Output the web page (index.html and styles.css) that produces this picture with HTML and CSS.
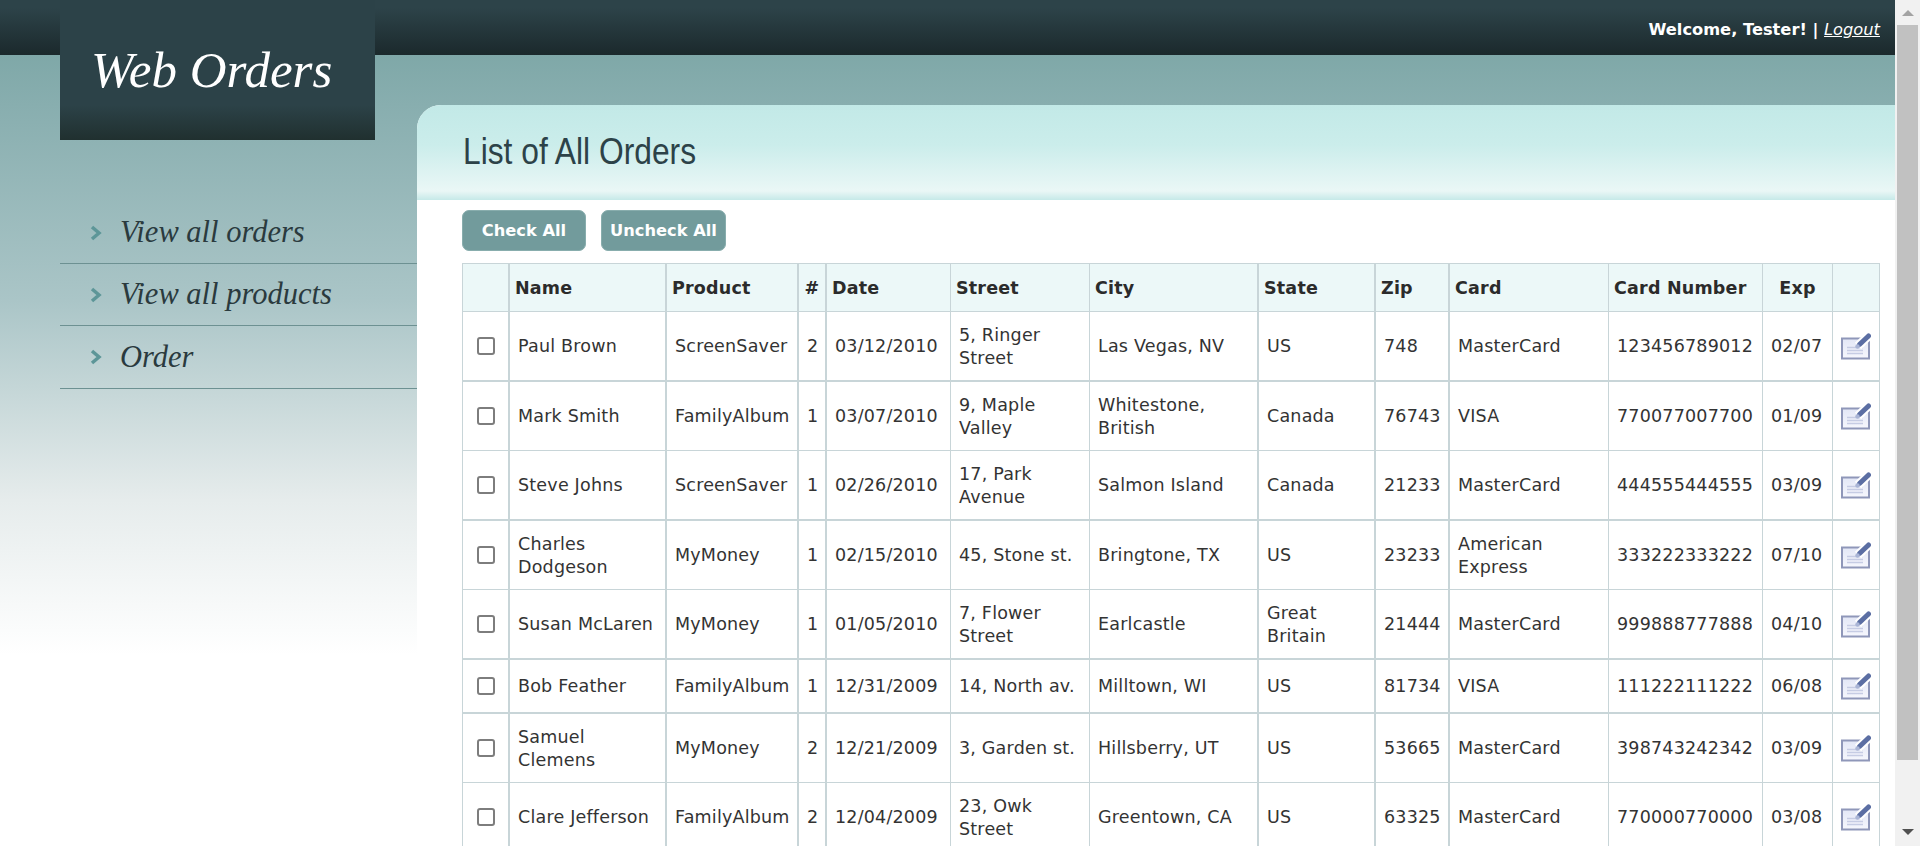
FILE: index.html
```html
<!DOCTYPE html>
<html lang="en">
<head>
<meta charset="utf-8">
<title>Web Orders</title>
<link rel="stylesheet" href="styles.css">
</head>
<body>
<svg class="defs" width="0" height="0" aria-hidden="true">
  <defs>
    <linearGradient id="sheet" x1="0" y1="0" x2="0" y2="1">
      <stop offset="0" stop-color="#e3e7f6"/>
      <stop offset="1" stop-color="#f6f7fd"/>
    </linearGradient>
  </defs>
  <symbol id="edit" viewBox="0 0 30 27">
    <rect x="1" y="5.500" width="27" height="20" fill="url(#sheet)" stroke="#8f97b9" stroke-width="2"/>
    <path d="M6 14.500H22M6 17.500H22M6 20.500H22" stroke="#c6cce4" stroke-width="1.300" fill="none"/>
    <path d="M17 13L27 3.500" stroke="#fff" stroke-width="9" fill="none"/>
    <path d="M18.500 11.500L27.500 3" stroke="#5b6ea3" stroke-width="5" stroke-linecap="round" fill="none"/>
    <circle cx="16.500" cy="13.500" r="2.200" fill="#aab5d6"/>
  </symbol>
</svg>
<div class="window">
  <div class="page">
    <aside class="sidebar">
      <div class="logo">Web Orders</div>
      <nav class="menu">
        <a class="menu-item"><svg class="chev" viewBox="0 0 12 16"><path d="M2 2L9 8L2 14"/></svg>View all orders</a>
        <a class="menu-item"><svg class="chev" viewBox="0 0 12 16"><path d="M2 2L9 8L2 14"/></svg>View all products</a>
        <a class="menu-item"><svg class="chev" viewBox="0 0 12 16"><path d="M2 2L9 8L2 14"/></svg>Order</a>
      </nav>
    </aside>
    <main class="main">
      <div class="login">Welcome, Tester! | <a class="logout">Logout</a></div>
      <section class="content">
        <header class="content-head"><h1>List of All Orders</h1></header>
        <div class="content-body">
          <div class="actions">
            <button class="btn">Check All</button>
            <button class="btn">Uncheck All</button>
          </div>
          <table class="orders">
            <colgroup>
              <col class="c1"><col class="c2"><col class="c3"><col class="c4"><col class="c5"><col class="c6"><col class="c7"><col class="c8"><col class="c9"><col class="c10"><col class="c11"><col class="c12"><col class="c13">
            </colgroup>
            <thead>
              <tr><th></th><th>Name</th><th>Product</th><th class="ctr">#</th><th>Date</th><th>Street</th><th>City</th><th>State</th><th>Zip</th><th>Card</th><th>Card Number</th><th class="ctr">Exp</th><th></th></tr>
            </thead>
            <tbody>
              <tr class="thick"><td class="chk"><input type="checkbox"></td><td>Paul Brown</td><td>ScreenSaver</td><td>2</td><td>03/12/2010</td><td>5, Ringer Street</td><td>Las Vegas, NV</td><td>US</td><td>748</td><td>MasterCard</td><td>123456789012</td><td>02/07</td><td><svg class="edit"><use href="#edit"/></svg></td></tr>
              <tr><td class="chk"><input type="checkbox"></td><td>Mark Smith</td><td>FamilyAlbum</td><td>1</td><td>03/07/2010</td><td>9, Maple Valley</td><td>Whitestone, British</td><td>Canada</td><td>76743</td><td>VISA</td><td>770077007700</td><td>01/09</td><td><svg class="edit"><use href="#edit"/></svg></td></tr>
              <tr class="thick"><td class="chk"><input type="checkbox"></td><td>Steve Johns</td><td>ScreenSaver</td><td>1</td><td>02/26/2010</td><td>17, Park Avenue</td><td>Salmon Island</td><td>Canada</td><td>21233</td><td>MasterCard</td><td>444555444555</td><td>03/09</td><td><svg class="edit"><use href="#edit"/></svg></td></tr>
              <tr><td class="chk"><input type="checkbox"></td><td>Charles Dodgeson</td><td>MyMoney</td><td>1</td><td>02/15/2010</td><td>45, Stone st.</td><td>Bringtone, TX</td><td>US</td><td>23233</td><td>American Express</td><td>333222333222</td><td>07/10</td><td><svg class="edit"><use href="#edit"/></svg></td></tr>
              <tr class="thick"><td class="chk"><input type="checkbox"></td><td>Susan McLaren</td><td>MyMoney</td><td>1</td><td>01/05/2010</td><td>7, Flower Street</td><td>Earlcastle</td><td>Great Britain</td><td>21444</td><td>MasterCard</td><td>999888777888</td><td>04/10</td><td><svg class="edit"><use href="#edit"/></svg></td></tr>
              <tr class="thick short"><td class="chk"><input type="checkbox"></td><td>Bob Feather</td><td>FamilyAlbum</td><td>1</td><td>12/31/2009</td><td>14, North av.</td><td>Milltown, WI</td><td>US</td><td>81734</td><td>VISA</td><td>111222111222</td><td>06/08</td><td><svg class="edit"><use href="#edit"/></svg></td></tr>
              <tr><td class="chk"><input type="checkbox"></td><td>Samuel Clemens</td><td>MyMoney</td><td>2</td><td>12/21/2009</td><td>3, Garden st.</td><td>Hillsberry, UT</td><td>US</td><td>53665</td><td>MasterCard</td><td>398743242342</td><td>03/09</td><td><svg class="edit"><use href="#edit"/></svg></td></tr>
              <tr class="thick"><td class="chk"><input type="checkbox"></td><td>Clare Jefferson</td><td>FamilyAlbum</td><td>2</td><td>12/04/2009</td><td>23, Owk Street</td><td>Greentown, CA</td><td>US</td><td>63325</td><td>MasterCard</td><td>770000770000</td><td>03/08</td><td><svg class="edit"><use href="#edit"/></svg></td></tr>
            </tbody>
          </table>
        </div>
      </section>
    </main>
  </div>
  <div class="scrollbar" aria-hidden="true">
    <div class="arrow up"></div>
    <div class="thumb"></div>
    <div class="arrow down"></div>
  </div>
</div>
</body>
</html>
```
FILE: styles.css
```css
* { box-sizing: border-box; }
html, body { margin: 0; height: 100%; overflow: hidden; background: #fff; }
html::-webkit-scrollbar, body::-webkit-scrollbar { display: none; }
body { font-family: "DejaVu Sans", Verdana, sans-serif; font-size: 17.500px; color: #333; }
.defs { display: block; height: 0; width: 0; }

.window { display: flex; height: 846px; width: 1920px; overflow: hidden; }

.page {
  flex: 1;
  min-width: 0;
  display: flex;
  align-items: flex-start;
  height: 846px;
  overflow: hidden;
  background:
    linear-gradient(#2d4349 0, #2d4349 8px, #1b292c 55px, transparent 55px) no-repeat 0 0 / 100% 55px,
    linear-gradient(#7fa8a8 0, #88aeaf 50px, #aac5c7 245px, #e6ecec 445px, #ffffff 600px) no-repeat 0 55px / 100% 600px,
    #fff;
}

.sidebar { width: 417px; flex: none; padding-left: 60px; }
.logo {
  width: 315px;
  height: 140px;
  padding: 40px 0 0 31px;
  background: linear-gradient(#2c4248 0, #2c4248 105px, #20302f 140px);
  color: #fff;
  font: italic 51px/1.2 "Liberation Serif", Georgia, serif;
}
.menu { margin-top: 62px; }
.menu-item {
  display: flex;
  align-items: center;
  height: 62px;
  border-bottom: 1px solid #6d9192;
  padding-left: 30px;
  color: #2a3a3e;
  font: italic 30.500px "Liberation Serif", Georgia, serif;
}
.menu-item:last-child { height: 63px; }
.chev { width: 12px; height: 16px; margin-right: 18px; flex: none; }
.chev path { fill: none; stroke: #5d9698; stroke-width: 3.500; }

.main { flex: 1; min-width: 0; }
.login {
  height: 55px;
  padding: 20px 15px 0 0;
  line-height: 20px;
  text-align: right;
  color: #fff;
  font-size: 16.250px;
  font-weight: bold;
}
.logout { font-weight: normal; font-style: italic; text-decoration: underline; }

.content { margin-top: 50px; background: #fff; border-top-left-radius: 24px; }
.content-head {
  height: 95px;
  padding: 0 0 3px 46px;
  display: flex;
  align-items: center;
  border-top-left-radius: 24px;
  background: linear-gradient(#c2e9e7 0, #cbedeb 40px, #eaf7f6 86px, #c6e9e8 95px);
}
.content-head h1 {
  margin: 0;
  font: normal 37.500px "Liberation Sans", Arial, sans-serif;
  color: #2c4248;
  transform: scaleX(.847);
  transform-origin: left center;
  white-space: nowrap;
}
.content-body { padding: 10px 15px 0 45px; }
.actions { display: flex; gap: 15px; height: 41px; margin-bottom: 12px; }
.btn {
  width: 124px;
  height: 41px;
  padding: 0;
  border: 1px solid #88adad;
  border-radius: 7px;
  background: #729b9c;
  color: #fff;
  font: bold 16.250px "DejaVu Sans", Verdana, sans-serif;
}
.btn + .btn { width: 125px; }

.orders {
  table-layout: fixed;
  width: 1418px;
  border-collapse: separate;
  border-spacing: 0;
  border-top: 1px solid #c8d5d8;
  border-left: 1px solid #c8d5d8;
  line-height: 22.500px;
  letter-spacing: .2px;
}
.c1 { width: 47px; } .c2 { width: 157px; } .c3 { width: 132px; } .c4 { width: 28px; }
.c5 { width: 124px; } .c6 { width: 139px; } .c7 { width: 169px; } .c8 { width: 117px; }
.c9 { width: 74px; } .c10 { width: 159px; } .c11 { width: 154px; } .c12 { width: 70px; } .c13 { width: 47px; }

.orders th, .orders td {
  border-right: 1px solid #c8d5d8;
  border-bottom: 1px solid #c8d5d8;
}
.orders th:nth-child(-n+4), .orders td:nth-child(-n+4),
.orders th:nth-child(n+7):nth-child(-n+9), .orders td:nth-child(n+7):nth-child(-n+9) { border-right-width: 2px; }

.orders th {
  height: 48px;
  padding: 1px 0 0 5px;
  background: #ecf8f8;
  text-align: left;
  font-weight: bold;
  color: #2b2b2b;
  white-space: nowrap;
}
.orders th.ctr { text-align: center; padding: 1px 0 0; }
.orders td { height: 69px; padding: 1px 4px 0 8px; vertical-align: middle; }
.orders tr.thick td { height: 70px; border-bottom-width: 2px; }
.orders tr.short td { height: 54px; }
.orders td.chk { padding: 0; text-align: center; }
.chk input {
  appearance: none;
  display: block;
  width: 18px;
  height: 18px;
  margin: 0 auto;
  border: 2px solid #7d7d7d;
  border-radius: 3px;
  background: #fff;
}
.edit { display: block; width: 30px; height: 27px; }

.scrollbar {
  flex: none;
  width: 25px;
  height: 846px;
  display: flex;
  flex-direction: column;
  align-items: center;
  background: #f1f1f1;
}
.arrow { width: 0; height: 0; border-left: 6px solid transparent; border-right: 6px solid transparent; }
.up { margin: 10px 0 9px; border-bottom: 6px solid #a3a3a3; }
.thumb { width: 21px; height: 735px; background: #c1c1c1; }
.down { margin-top: 69px; border-top: 6px solid #505050; }
```
